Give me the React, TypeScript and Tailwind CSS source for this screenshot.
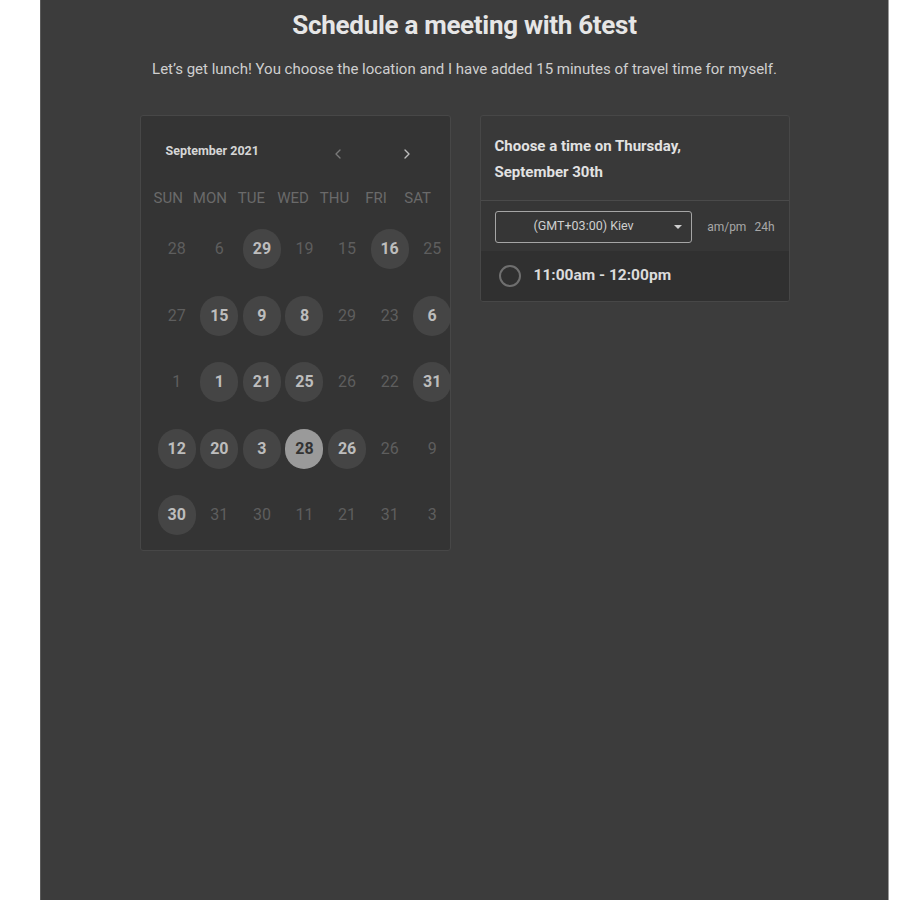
import { ChevronLeft, ChevronRight } from "lucide-react";

type Day = { n: number; on?: boolean; sel?: boolean };

const weeks: Day[][] = [
  [{ n: 28 }, { n: 6 }, { n: 29, on: true }, { n: 19 }, { n: 15 }, { n: 16, on: true }, { n: 25 }],
  [{ n: 27 }, { n: 15, on: true }, { n: 9, on: true }, { n: 8, on: true }, { n: 29 }, { n: 23 }, { n: 6, on: true }],
  [{ n: 1 }, { n: 1, on: true }, { n: 21, on: true }, { n: 25, on: true }, { n: 26 }, { n: 22 }, { n: 31, on: true }],
  [{ n: 12, on: true }, { n: 20, on: true }, { n: 3, on: true }, { n: 28, sel: true }, { n: 26, on: true }, { n: 26 }, { n: 9 }],
  [{ n: 30, on: true }, { n: 31 }, { n: 30 }, { n: 11 }, { n: 21 }, { n: 31 }, { n: 3 }],
];

const weekdays = ["SUN", "MON", "TUE", "WED", "THU", "FRI", "SAT"];

const DayCell = ({ day }: { day: Day }) => {
  if (day.sel) {
    return (
      <div className="flex h-[66.5px] items-center justify-center">
        <div className="flex h-[40px] w-[38px] items-center justify-center rounded-full bg-[#9a9a9a] text-[16px] font-bold text-[#333]">
          {day.n}
        </div>
      </div>
    );
  }
  if (day.on) {
    return (
      <div className="flex h-[66.5px] items-center justify-center">
        <div className="flex h-[40px] w-[38px] items-center justify-center rounded-full bg-[#454545] text-[16px] font-bold text-[#bdbdbd]">
          {day.n}
        </div>
      </div>
    );
  }
  return (
    <div className="flex h-[66.5px] items-center justify-center text-[16px] text-[#5e5e5e]">
      {day.n}
    </div>
  );
};

const Calendar = () => {
  return (
    <div className="h-[436px] w-[311px] overflow-hidden rounded-[3px] border border-[#474747] bg-[#343434]">
      <div className="flex h-[71px] items-center pl-[25px]">
        <span className="w-[164px] text-[12.5px] font-bold text-[#d6d6d6]">September 2021</span>
        <ChevronLeft size={16} strokeWidth={2} className="mt-[6px] text-[#7a7a7a]" />
        <ChevronRight size={16} strokeWidth={2} className="ml-[53px] mt-[6px] text-[#bdbdbd]" />
      </div>
      <div className="grid w-[298px] grid-cols-7 pl-[7px]">
        {weekdays.map((w) => (
          <div key={w} className="text-center text-[15px] text-[#6a6a6a]">
            {w}
          </div>
        ))}
      </div>
      <div className="mt-[7px] grid w-[313px] grid-cols-7 pl-[15px]">
        {weeks.flat().map((d, i) => (
          <DayCell key={i} day={d} />
        ))}
      </div>
    </div>
  );
};

const TimePanel = () => {
  return (
    <div className="w-[310px] overflow-hidden rounded-[3px] border border-[#474747] bg-[#393939]">
      <div className="h-[85px] border-b border-[#4a4a4a] px-[14px] pt-[17px] text-[15px] font-bold leading-[26px] text-[#e2e2e2]">
        Choose a time on Thursday,
        <br />
        September 30th
      </div>
      <div className="flex h-[50px] items-center bg-[#363636] px-[14px] pt-[2px]">
        <div className="flex h-[32px] w-[198px] items-center rounded-[3px] border border-[#a5a5a5] pl-[38px] pr-[9px] text-[12.5px] text-[#cfcfcf]">
          <span className="flex-1">(GMT+03:00) Kiev</span>
          <span className="h-0 w-0 border-x-[4px] border-t-[4px] border-x-transparent border-t-[#cfcfcf]" />
        </div>
        <span className="ml-[15px] text-[12px] text-[#a8a8a8]">am/pm</span>
        <span className="ml-[8px] text-[12px] text-[#a8a8a8]">24h</span>
      </div>
      <div className="flex h-[50px] items-center bg-[#303030] px-[18px]">
        <div className="h-[22px] w-[22px] rounded-full border-2 border-[#6f6f6f]" />
        <span className="ml-[13px] text-[15.5px] font-bold text-[#dcdcdc]">11:00am - 12:00pm</span>
      </div>
    </div>
  );
};

export default function App() {
  return (
    <div className="min-h-[900px] bg-white" style={{ fontFamily: "Roboto, 'Liberation Sans', sans-serif" }}>
      <div className="ml-[40px] min-h-[900px] w-[849px] border-l border-r border-l-[#5a5a5a] border-r-[#9a9a9a] bg-[#3c3c3c]">
        <h1 className="pt-[6px] text-center text-[26px] font-bold tracking-[-0.3px] text-[#e6e6e6]">
          Schedule a meeting with 6test
        </h1>
        <p className="mt-[13px] text-center text-[15px] text-[#cfcfcf]">
          Let’s get lunch! You choose the location and I have added 15 minutes of travel time for myself.
        </p>
        <div className="mt-[34px] flex items-start justify-center gap-[29px]">
          <Calendar />
          <TimePanel />
        </div>
      </div>
    </div>
  );
}
